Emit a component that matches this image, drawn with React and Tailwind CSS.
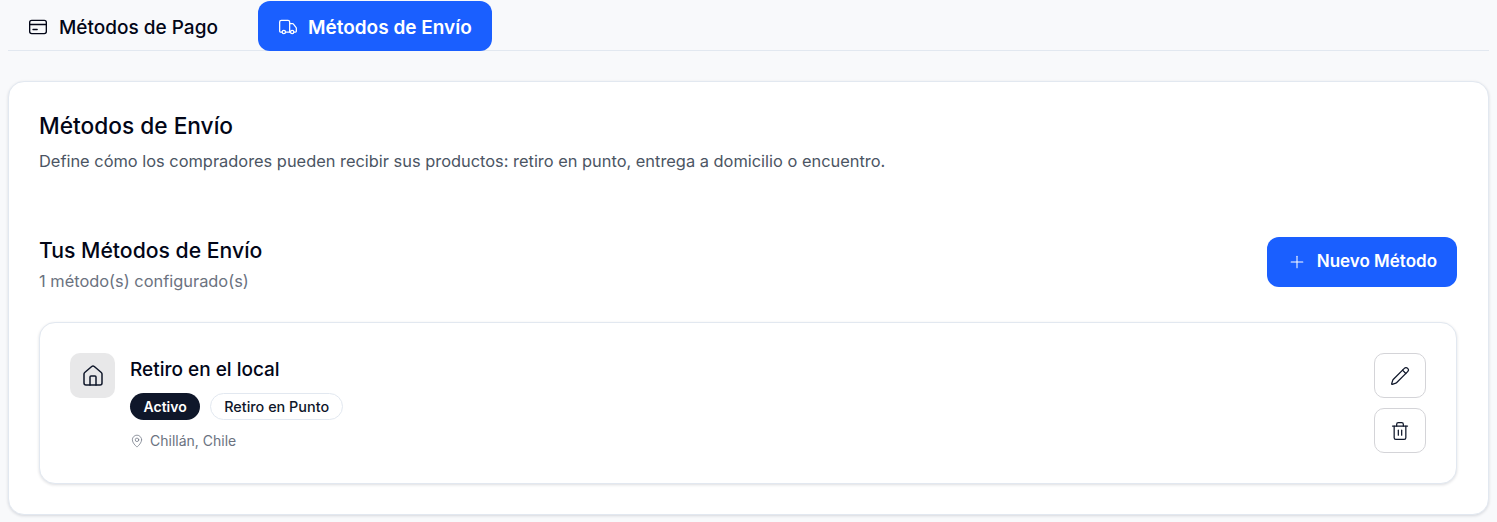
import { Truck, Plus, House, MapPin, Pencil, Trash2 } from 'lucide-react';

// Card listing a single configured shipping method
function MethodCard() {
  return (
    <div className="flex justify-between rounded-2xl border border-[#e2e8f0] bg-white p-[30px] shadow-[0_1px_3px_rgba(15,23,42,0.14)]">
      <div className="flex gap-[15px]">
        <div className="flex h-[45px] w-[45px] items-center justify-center rounded-[10px] bg-[#e8e8e9] text-[#0f172a]">
          <House size={24} strokeWidth={1.5} />
        </div>
        <div className="pt-[2px]">
          <p className="text-[19px] leading-[30px] font-medium text-[#020617]">Retiro en el local</p>
          <div className="mt-[8px] flex gap-[10px]">
            <span className="flex h-[27px] items-center rounded-full bg-[#0f172a] px-[13.5px] text-[14px] font-semibold text-white">Activo</span>
            <span className="flex h-[27px] items-center rounded-full border border-[#e2e8f0] px-[13px] text-[14.4px] font-medium text-[#0f172a]">Retiro en Punto</span>
          </div>
          <p className="mt-[11px] flex items-center gap-[6px] text-[14px] leading-[20px] text-[#6b7280]">
            <MapPin size={14} strokeWidth={1.25} />
            Chillán, Chile
          </p>
        </div>
      </div>
      <div className="flex flex-col gap-[10px]">
        <button className="flex h-[45px] w-[52px] items-center justify-center rounded-[10px] border border-[#d4d4d8] bg-white text-[#0f172a]">
          <Pencil size={20} strokeWidth={1.5} />
        </button>
        <button className="flex h-[45px] w-[52px] items-center justify-center rounded-[10px] border border-[#d4d4d8] bg-white text-[#0f172a]">
          <Trash2 size={20} strokeWidth={1.5} />
        </button>
      </div>
    </div>
  );
}

export default function App() {
  return (
    <div className="h-[522px] overflow-hidden bg-[#f8f9fb] px-2 pt-[1px] font-['Inter',sans-serif]">
      {/* Tabs */}
      <div className="flex h-[50px] gap-[20px] border-b border-[#e2e8f0]">
        <button className="flex h-[50px] items-center gap-[11px] rounded-xl px-5 pt-[1px] text-[19px] font-medium text-[#020617]">
          <svg width="20" height="20" viewBox="0 0 24 24" fill="none" stroke="currentColor" strokeWidth="1.6" strokeLinecap="round" strokeLinejoin="round">
            <rect x="2" y="4" width="20" height="16" rx="2.5" />
            <path d="M2 9h20" />
            <path d="M6 15h5" />
          </svg>
          <span className="pt-[3px]">Métodos de Pago</span>
        </button>
        <button className="flex h-[50px] items-center gap-[10px] rounded-xl bg-[#1a5fff] px-5 pt-[1px] text-[19px] font-semibold text-white">
          <Truck size={20} strokeWidth={1.5} />
          <span className="pt-[3px]">Métodos de Envío</span>
        </button>
      </div>

      <div className="mt-[30px] rounded-2xl border border-[#e2e8f0] bg-white pt-[28px] pr-[31px] pb-[30px] pl-[30px] shadow-[0_1px_3px_rgba(15,23,42,0.14)]">
        <h2 className="text-[22.7px] leading-[32px] font-medium text-[#020617]">Métodos de Envío</h2>
        <p className="mt-[7px] text-[16.4px] leading-[24px] text-[#4b5563]">
          Define cómo los compradores pueden recibir sus productos: retiro en punto, entrega a domicilio o encuentro.
        </p>

        <div className="mt-[63px] flex items-start justify-between">
          <div>
            <h3 className="text-[21.2px] leading-[28px] font-medium text-[#020617]">Tus Métodos de Envío</h3>
            <p className="mt-[5px] text-[16.4px] leading-[24px] text-[#6b7280]">1 método(s) configurado(s)</p>
          </div>
          <button className="mt-[1px] flex h-[50px] items-center gap-[10px] rounded-xl bg-[#1a5fff] px-[20px] text-[17px] font-semibold text-white">
            <Plus size={20} strokeWidth={1.25} />
            Nuevo Método
          </button>
        </div>

        <div className="mt-[29px]">
          <MethodCard />
        </div>
      </div>
    </div>
  );
}
